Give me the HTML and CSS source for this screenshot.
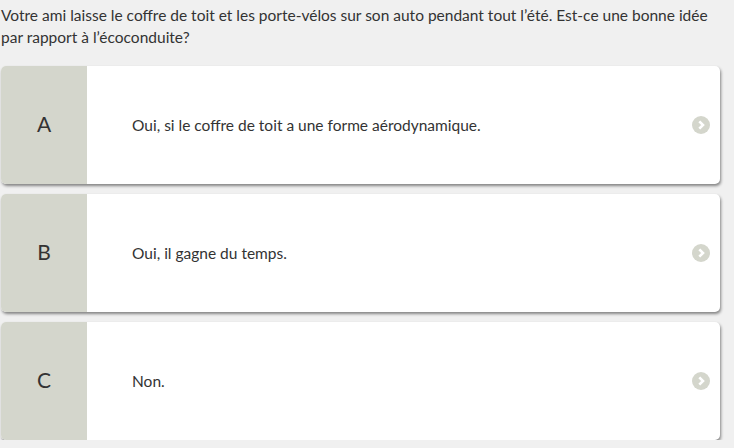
FILE: index.html
```html
<!DOCTYPE html>
<html lang="fr">
<head>
    <meta charset="UTF-8">
    <meta name="viewport" content="width=device-width, initial-scale=1.0">
    <title>Écoconduite</title>
    <link rel="stylesheet" href="styles.css">
</head>
<body>
    <div class="quiz">
        <p class="question">Votre ami laisse le coffre de toit et les porte-vélos sur son auto pendant tout l’été. Est-ce une bonne idée par rapport à l’écoconduite?</p>
        <div class="answers">
            <div class="answer">
                <div class="letter">A</div>
                <div class="label">Oui, si le coffre de toit a une forme aérodynamique.</div>
                <span class="arrow"><svg width="18" height="18" viewBox="0 0 18 18"><circle cx="9" cy="9" r="9" fill="#d4d6cc"/><path d="M7.3 5.3 L11 9 L7.3 12.7" fill="none" stroke="#fff" stroke-width="2.6"/></svg></span>
            </div>
            <div class="answer">
                <div class="letter">B</div>
                <div class="label">Oui, il gagne du temps.</div>
                <span class="arrow"><svg width="18" height="18" viewBox="0 0 18 18"><circle cx="9" cy="9" r="9" fill="#d4d6cc"/><path d="M7.3 5.3 L11 9 L7.3 12.7" fill="none" stroke="#fff" stroke-width="2.6"/></svg></span>
            </div>
            <div class="answer">
                <div class="letter">C</div>
                <div class="label">Non.</div>
                <span class="arrow"><svg width="18" height="18" viewBox="0 0 18 18"><circle cx="9" cy="9" r="9" fill="#d4d6cc"/><path d="M7.3 5.3 L11 9 L7.3 12.7" fill="none" stroke="#fff" stroke-width="2.6"/></svg></span>
            </div>
        </div>
    </div>
</body>
</html>
```

FILE: styles.css
```css
body {
    margin: 0;
    background: #f0f0f0;
    font-family: Lato, 'Open Sans', sans-serif;
    color: #333;
}
.quiz {
    padding: 4px 0 0 1px;
    width: 719px;
}
.question {
    margin: 0 0 18px;
    font-size: 15.5px;
    line-height: 22px;
}
.answers {
    display: flex;
    flex-direction: column;
    gap: 10px;
}
.answer {
    display: flex;
    align-items: center;
    height: 118px;
    background: white;
    border-radius: 5px;
    overflow: hidden;
    box-shadow: 1px 2px 3px rgba(0, 0, 0, 0.45);
}
.letter {
    width: 86px;
    height: 100%;
    background: #d4d6cc;
    display: flex;
    align-items: center;
    justify-content: center;
    padding-bottom: 3px;
    box-sizing: border-box;
    font-size: 21px;
    color: #333;
}
.label {
    flex: 1;
    padding-left: 45px;
    font-size: 15.5px;
}
.arrow {
    display: flex;
    margin-right: 10px;
}
```
